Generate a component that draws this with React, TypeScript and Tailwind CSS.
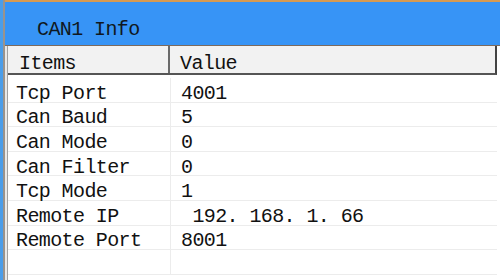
import React from "react";

const rows: [string, string][] = [
  ["Tcp Port", "4001"],
  ["Can Baud", "5"],
  ["Can Mode", "0"],
  ["Can Filter", "0"],
  ["Tcp Mode", "1"],
  ["Remote IP", " 192. 168. 1. 66"],
  ["Remote Port", "8001"],
  ["", ""],
];

const mono = { fontFamily: '"Liberation Mono", "DejaVu Sans Mono", monospace' };

export default function App() {
  return (
    <div className="w-[500px] h-[280px] flex bg-white overflow-hidden text-[#111]" style={mono}>
      {/* desktop edge */}
      <div className="w-[3px] bg-[#4b9de9]" />
      <div className="w-[2px] bg-[#9a938c]" />

      <div className="flex-1 flex flex-col">
        {/* title bar */}
        <div className="h-[46px] bg-[#3794f6] border-t-2 border-[#d69a52] border-b border-b-[#7d6a5c] flex items-center pl-[32px] pt-[13px]">
          <span className="text-[20px] tracking-[-0.6px] leading-none text-[#101820]">CAN1 Info</span>
        </div>

        <div className="flex-1 flex bg-white">
          <div className="w-[3px] bg-[#e9e9e9] border-r border-[#a0a0a0]" />
          <div className="flex-1 flex flex-col pr-[3px]">
            {/* header */}
            <div className="h-[29px] flex bg-[#f2f2f2] border-b-2 border-[#555] border-r-2 border-r-[#444]">
              <div className="w-[162px] border-r-2 border-[#6a6a6a] flex items-center pl-[11px] pt-[9px]">
                <span className="text-[20px] tracking-[-0.6px] leading-none">Items</span>
              </div>
              <div className="flex-1 flex items-center pl-[10px] pt-[9px]">
                <span className="text-[20px] tracking-[-0.6px] leading-none">Value</span>
              </div>
            </div>

            {/* data rows */}
            <div className="pt-[3px]">
              {rows.map(([k, v], i) => (
                <div key={i} className="h-[24.6px] flex border-b border-[#ececec]">
                  <div className="w-[163px] border-r border-[#ececec] flex items-center pl-[8px] pt-[8px]">
                    <span className="text-[20px] tracking-[-0.6px] leading-none whitespace-pre">{k}</span>
                  </div>
                  <div className="flex-1 flex items-center pl-[10px] pt-[8px]">
                    <span className="text-[20px] tracking-[-0.6px] leading-none whitespace-pre">{v}</span>
                  </div>
                </div>
              ))}
            </div>
          </div>
        </div>
      </div>
    </div>
  );
}
